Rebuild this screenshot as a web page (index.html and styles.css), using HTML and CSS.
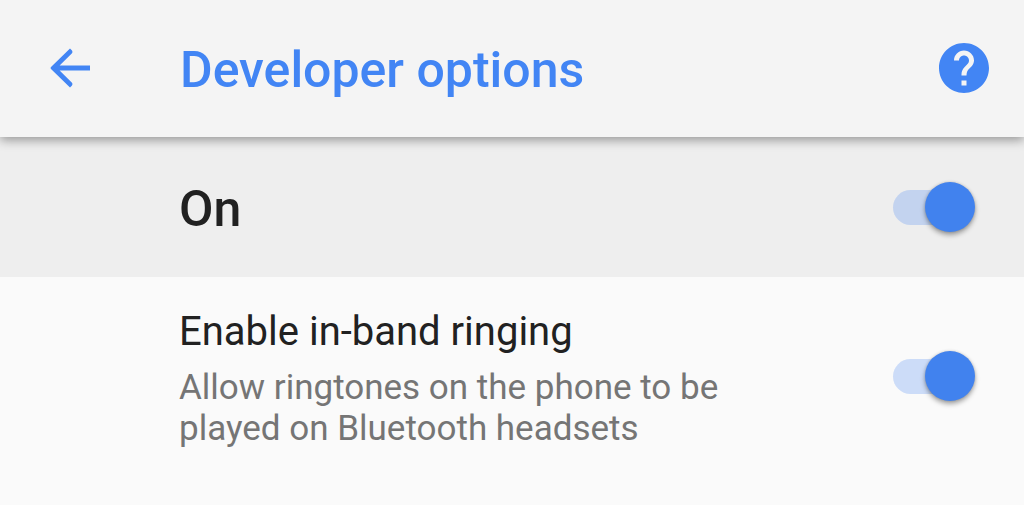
FILE: index.html
```html
<!DOCTYPE html>
<html lang="en">
<head>
<meta charset="utf-8">
<meta name="viewport" content="width=device-width, initial-scale=1">
<title>Developer options</title>
<link rel="stylesheet" href="styles.css">
</head>
<body>
<header class="app-bar">
  <button class="icon-button" type="button" aria-label="Back">
    <svg class="back-icon" viewBox="0 0 40 40" aria-hidden="true"><path d="M40 17.500H9.600L22 5.300Q23 4 22 2.600L20 .5L1 19Q0 20 1 21L20 39.500L22 37.400Q23 36 22 34.700L9.600 22.500H40Z"/></svg>
  </button>
  <h1 class="title">Developer options</h1>
  <button class="icon-button" type="button" aria-label="Help">
    <svg class="help-icon" viewBox="2 2 20 20" aria-hidden="true"><path d="M12 2C6.480 2 2 6.480 2 12s4.480 10 10 10 10-4.480 10-10S17.520 2 12 2zm1 17h-2v-2h2v2zm2.070-7.750l-.9.920C13.450 12.900 13 13.500 13 15h-2v-.5c0-1.100.450-2.100 1.170-2.830l1.240-1.260c.370-.360.590-.860.590-1.410 0-1.100-.9-2-2-2s-2 .9-2 2H8c0-2.210 1.790-4 4-4s4 1.790 4 4c0 .880-.360 1.680-.930 2.250z"/></svg>
  </button>
</header>
<main>
  <label class="row master">
    <span class="master-label">On</span>
    <input class="switch" type="checkbox" role="switch" checked>
  </label>
  <label class="row option">
    <span class="option-text">
      <span class="option-title">Enable in-band ringing</span>
      <span class="option-summary">Allow ringtones on the phone to be played on Bluetooth headsets</span>
    </span>
    <input class="switch" type="checkbox" role="switch" checked>
  </label>
</main>
</body>
</html>
```
FILE: styles.css
```css
* { box-sizing: border-box; }
body {
  margin: 0;
  background: #fafafa;
  color: #212121;
  font-family: Roboto, sans-serif;
}
.app-bar {
  position: relative;
  display: flex;
  align-items: center;
  height: 137px;
  padding: 0 35px 2px 50px;
  background: #f4f4f4;
  color: #4285f4;
  box-shadow: 0 3px 10px rgba(0, 0, 0, 0.38);
}
.icon-button {
  display: flex;
  padding: 0;
  border: 0;
  background: none;
  color: inherit;
}
.icon-button svg { fill: currentColor; }
.back-icon { width: 40px; height: 40px; }
.help-icon { width: 50px; height: 50px; }
.title {
  flex: 1;
  margin: 4px 0 0 90px;
  font-size: 50px;
  line-height: 60px;
  font-weight: 500;
}
.row {
  display: flex;
  align-items: center;
  justify-content: space-between;
  padding: 0 49px 0 179px;
}
.master {
  height: 140px;
  background: #eeeeee;
}
.master-label {
  padding-top: 4px;
  font-size: 50px;
  line-height: 60px;
  font-weight: 500;
}
.option { padding-top: 26px; }
.option-text {
  max-width: 580px;
  padding-top: 5px;
}
.option-title, .option-summary { display: block; }
.option-title {
  font-size: 40px;
  line-height: 48px;
}
.option-summary {
  margin-top: 11px;
  color: #757575;
  font-size: 35px;
  line-height: 41px;
}
.switch {
  appearance: none;
  display: grid;
  align-items: center;
  width: 82px;
  height: 50px;
  margin: 0;
}
.switch::before,
.switch::after {
  content: "";
  grid-area: 1 / 1;
}
.switch::before {
  width: 70px;
  height: 35px;
  border-radius: 18px;
  background: rgba(66, 133, 244, 0.25);
}
.switch::after {
  justify-self: start;
  width: 50px;
  height: 50px;
  border-radius: 50%;
  background: #4182ee;
  box-shadow: 0 3px 5px rgba(0, 0, 0, 0.35), 0 0 3px rgba(0, 0, 0, 0.15);
}
.switch:checked::after { justify-self: end; }
```
